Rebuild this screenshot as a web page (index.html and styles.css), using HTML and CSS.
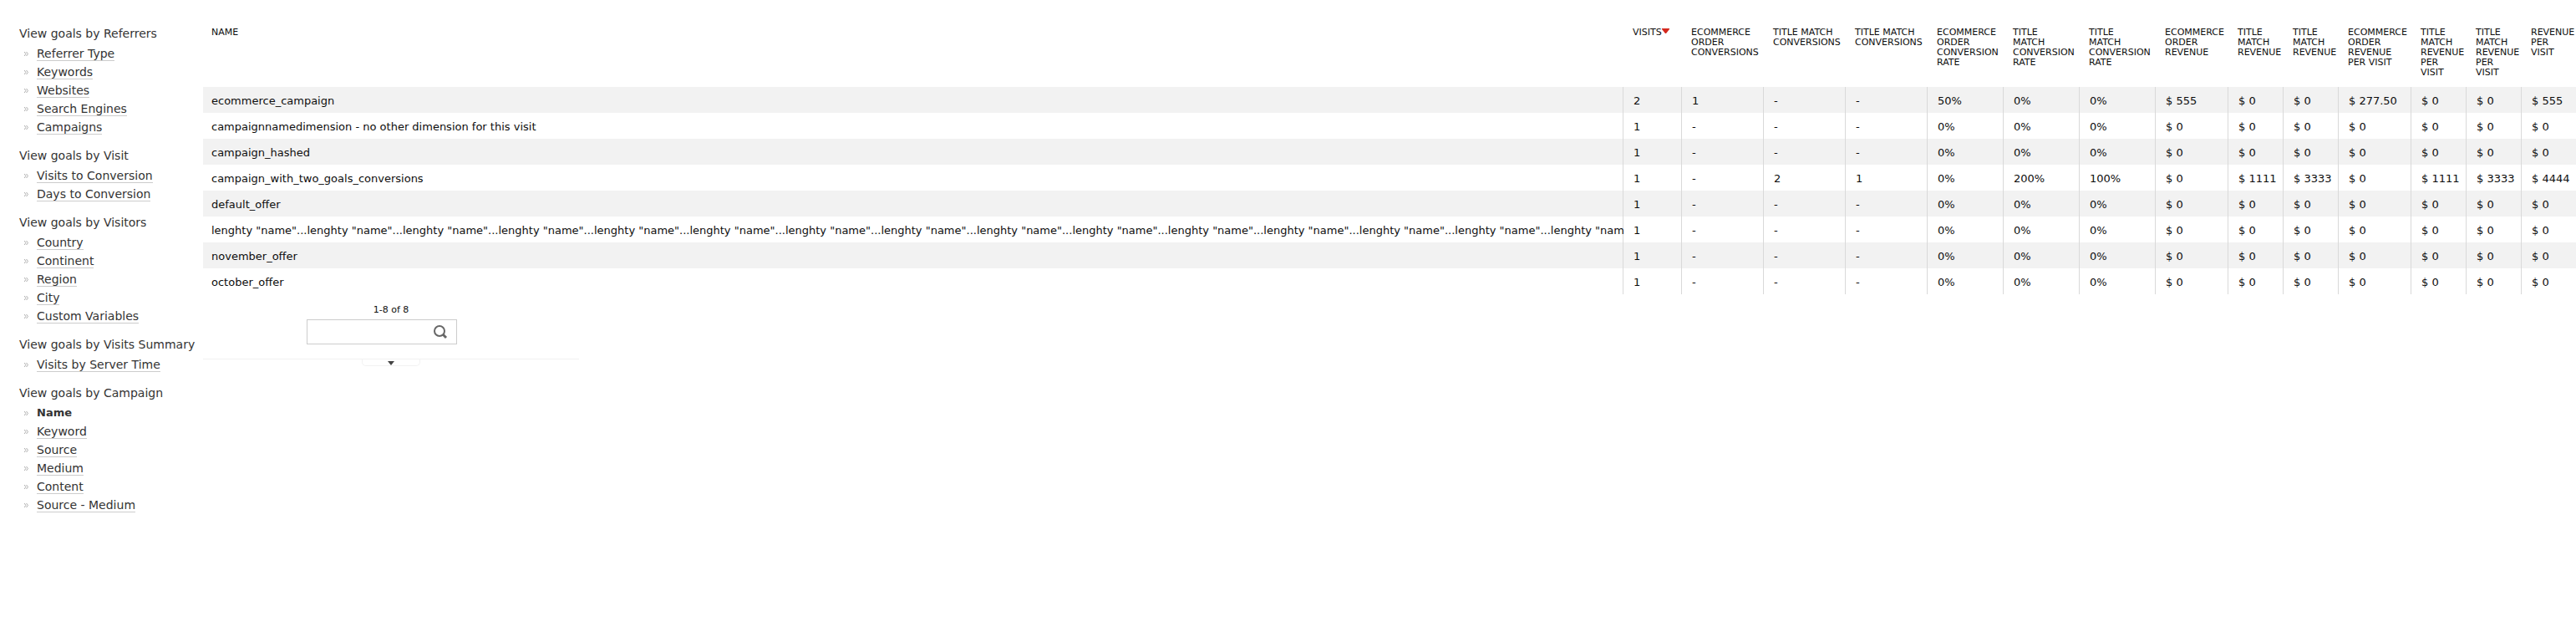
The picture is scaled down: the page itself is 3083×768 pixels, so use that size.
FILE: index.html
```
<!DOCTYPE html>
<html lang="en">
<head>
<meta charset="utf-8">
<title>Goals by Campaign</title>
<link rel="stylesheet" href="styles.css">
</head>
<body>
<div class="page">
<nav class="dimensions" id="dimensions"></nav>
<main class="report">
<table class="data">
<colgroup><col><col class="visits"><col class="count"><col class="count"><col class="count"><col class="rate"><col class="rate"><col class="rate"><col class="order"><col class="money"><col class="money"><col class="order"><col class="money"><col class="money"><col class="money"></colgroup>
<thead><tr id="head"></tr></thead>
<tbody id="rows"></tbody>
</table>
<footer class="controls">
<p class="pages">1-8 of 8</p>
<form class="search">
<input class="query" type="text" aria-label="Search">
<button class="go" type="button" aria-label="Search"><svg width="18" height="18" viewBox="0 0 18 18" fill="none" stroke="#666"><circle cx="8" cy="8" r="6" stroke-width="2"/><path d="M12 12l4 4" stroke-width="3"/></svg></button>
</form>
<div class="expander"><button class="toggle" type="button" aria-label="Show options"><svg width="8" height="5" viewBox="0 0 8 5"><path d="M0 0h8L4 5z" fill="#444"/></svg></button></div>
</footer>
</main>
</div>
<script src="script.js"></script>
</body>
</html>
```
FILE: styles.css
```
body {
  margin: 0;
  background: #fff;
  color: #0d0d0d;
  font: 13px/16px "DejaVu Sans", sans-serif;
}
.page {
  display: flex;
  padding-top: 23px;
}
.dimensions {
  flex: 0 0 220px;
  padding: 6px 0 0 23px;
  color: #333;
  font-size: 14px;
  line-height: 22px;
}
.group-title {
  margin: 0;
  font-size: 14px;
  font-weight: 400;
  white-space: nowrap;
}
.group {
  margin: 2px 0 12px;
  padding: 0;
  list-style: none;
}
.item {
  display: flex;
  align-items: center;
  gap: 10px;
  height: 22px;
  padding-left: 6px;
}
.link {
  border-bottom: 1px solid #ccc;
  color: #333;
  line-height: 16px;
  text-decoration: none;
}
.current {
  border-color: transparent;
  font-weight: 700;
  font-size: 13px;
}
.report {
  flex: 1;
  min-width: 0;
}
.data {
  width: 100%;
  border-collapse: separate;
  border-spacing: 0;
  table-layout: fixed;
}
.visits { width: 70px; }
.count { width: 98px; }
.rate { width: 91px; }
.order { width: 87px; }
.money { width: 66px; }
.heading {
  height: 71px;
  padding: 10px 0 0 12px;
  font-size: 11px;
  font-weight: 400;
  line-height: 12px;
  text-align: left;
  text-transform: uppercase;
  vertical-align: top;
}
.sort {
  vertical-align: 2px;
}
.cell {
  height: 31px;
  padding: 2px 0 0 12px;
  border-left: 1px solid #d9d9d9;
  white-space: nowrap;
  box-sizing: border-box;
}
.heading:first-child,
.cell:first-child {
  padding-left: 10px;
  border-left: 0;
}
.row:nth-child(odd) {
  background: #f2f2f2;
}
.controls {
  width: 450px;
}
.pages {
  margin: 0;
  padding: 11px 0 3px;
  font-size: 11px;
  text-align: center;
}
.search {
  display: flex;
  align-items: center;
  width: 178px;
  height: 28px;
  margin-left: 124px;
  border: 1px solid #ccc;
}
.query {
  flex: 1;
  min-width: 0;
  border: 0;
  outline: 0;
  background: none;
}
.go {
  display: flex;
  padding: 0 10px 0 0;
  border: 0;
  background: none;
}
.expander {
  display: flex;
  justify-content: center;
  margin-top: 17px;
  border-top: 1px solid #f2f2f2;
}
.toggle {
  display: flex;
  justify-content: center;
  width: 70px;
  height: 8px;
  padding: 2px 0 0;
  border: 1px solid #f2f2f2;
  border-top: 0;
  border-radius: 0 0 5px 5px;
  background: #fff;
}
```
FILE: script.js
```
const groups = [
  ["View goals by Referrers", ["Referrer Type", "Keywords", "Websites", "Search Engines", "Campaigns"]],
  ["View goals by Visit", ["Visits to Conversion", "Days to Conversion"]],
  ["View goals by Visitors", ["Country", "Continent", "Region", "City", "Custom Variables"]],
  ["View goals by Visits Summary", ["Visits by Server Time"]],
  ["View goals by Campaign", ["Name", "Keyword", "Source", "Medium", "Content", "Source - Medium"]]
];
const bullet = '<svg width="5" height="5" viewBox="0 0 5 5" fill="none" stroke="#aaa"><path d="M0 0l2 2.500-2 2.500M2.500 0l2 2.500-2 2.500"/></svg>';
document.getElementById("dimensions").innerHTML = groups.map(([title, items]) =>
  `<h2 class="group-title">${title}</h2><ul class="group">` + items.map(name =>
    `<li class="item">${bullet}<a class="link${name === "Name" ? " current" : ""}" href="#">${name}</a></li>`).join("") + "</ul>").join("");

const sort = '<svg class="sort" width="9" height="6" viewBox="0 0 9 6"><path d="M0 0h9v1L5 6H4L0 1z" fill="#d4291f"/></svg>';
const heads = ["Name", "Visits" + sort, "Ecommerce<br>Order<br>Conversions", "Title Match<br>Conversions", "Title Match<br>Conversions",
  "Ecommerce<br>Order<br>Conversion<br>Rate", "Title<br>Match<br>Conversion<br>Rate", "Title<br>Match<br>Conversion<br>Rate",
  "Ecommerce<br>Order<br>Revenue", "Title<br>Match<br>Revenue", "Title<br>Match<br>Revenue", "Ecommerce<br>Order<br>Revenue<br>Per Visit",
  "Title<br>Match<br>Revenue<br>Per<br>Visit", "Title<br>Match<br>Revenue<br>Per<br>Visit", "Revenue<br>Per<br>Visit"];
document.getElementById("head").innerHTML = heads.map(h => `<th class="heading" scope="col">${h}</th>`).join("");

const plain = ["1", "-", "-", "-", "0%", "0%", "0%", "$ 0", "$ 0", "$ 0", "$ 0", "$ 0", "$ 0", "$ 0"];
const rows = [
  ["ecommerce_campaign", "2", "1", "-", "-", "50%", "0%", "0%", "$ 555", "$ 0", "$ 0", "$ 277.50", "$ 0", "$ 0", "$ 555"],
  ["campaignnamedimension - no other dimension for this visit", ...plain],
  ["campaign_hashed", ...plain],
  ["campaign_with_two_goals_conversions", "1", "-", "2", "1", "0%", "200%", "100%", "$ 0", "$ 1111", "$ 3333", "$ 0", "$ 1111", "$ 3333", "$ 4444"],
  ["default_offer", ...plain],
  ['lenghty "name"...'.repeat(14) + 'lenghty "nam', ...plain],
  ["november_offer", ...plain],
  ["october_offer", ...plain]
];
document.getElementById("rows").innerHTML = rows.map(r =>
  '<tr class="row">' + r.map(c => `<td class="cell">${c}</td>`).join("") + "</tr>").join("");
```
